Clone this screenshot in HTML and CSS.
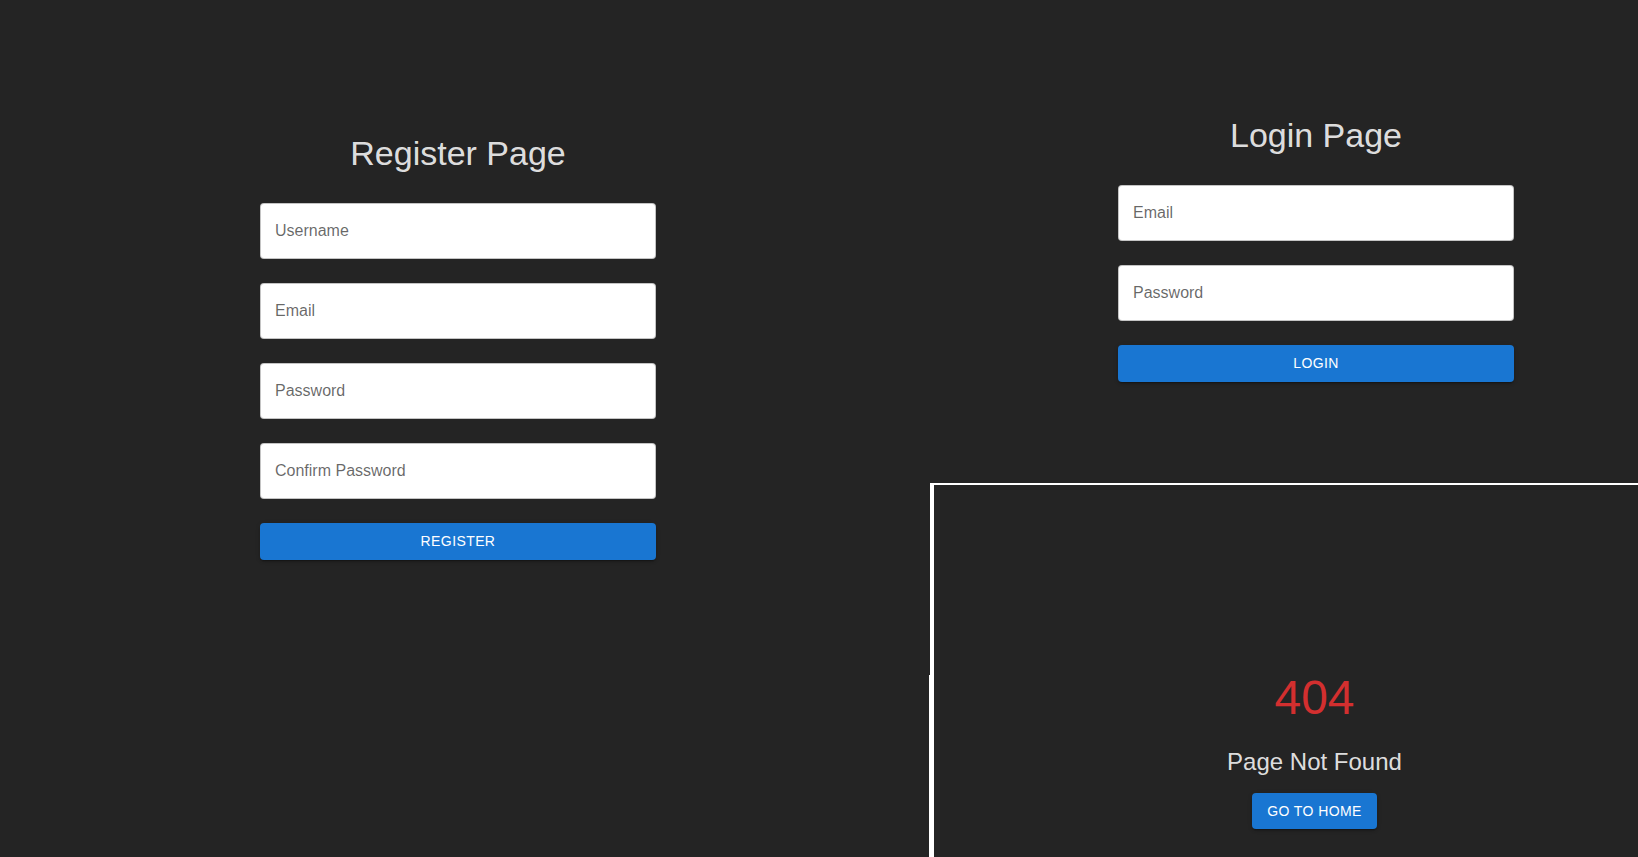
FILE: index.html
```html
<!DOCTYPE html>
<html lang="en">
<head>
<meta charset="utf-8">
<title>Auth Pages</title>
<link rel="stylesheet" href="styles.css">
</head>
<body>
<main class="page">
  <section class="col-left">
    <form class="form form-register">
      <h1 class="title">Register Page</h1>
      <input class="field" type="text" placeholder="Username">
      <input class="field" type="email" placeholder="Email">
      <input class="field" type="password" placeholder="Password">
      <input class="field" type="password" placeholder="Confirm Password">
      <button class="btn btn-full" type="button">Register</button>
    </form>
  </section>
  <section class="col-right">
    <form class="form form-login">
      <h1 class="title">Login Page</h1>
      <input class="field" type="email" placeholder="Email">
      <input class="field" type="password" placeholder="Password">
      <button class="btn btn-full" type="button">Login</button>
    </form>
    <div class="notfound">
      <div class="nf-code">404</div>
      <div class="nf-text">Page Not Found</div>
      <button class="btn" type="button">Go to Home</button>
    </div>
  </section>
</main>
</body>
</html>
```
FILE: styles.css
```css
html, body {
  margin: 0;
  padding: 0;
  overflow: hidden;
  height: 100%;
}
body {
  background: #242424;
  color: rgba(255, 255, 255, 0.87);
  font-family: "Liberation Sans", Arial, Helvetica, sans-serif;
}
.page {
  display: grid;
  grid-template-columns: 930px 772px;
  height: 857px;
}
.col-left {
  padding-left: 260px;
  padding-top: 132px;
}
.col-right {
  display: flex;
  flex-direction: column;
}
.form {
  width: 396px;
  display: flex;
  flex-direction: column;
  gap: 24px;
}
.form-login {
  margin: 114px 0 0 188px;
}
.title {
  margin: 0 0 5px 0;
  font-size: 34px;
  font-weight: 400;
  line-height: 42px;
  text-align: center;
  color: rgba(255, 255, 255, 0.87);
}
.field {
  box-sizing: border-box;
  height: 56px;
  width: 100%;
  margin: 0;
  padding: 0 14px;
  border: 1px solid rgba(0, 0, 0, 0.23);
  border-radius: 4px;
  background: #fff;
  font-family: inherit;
  font-size: 16px;
  color: rgba(0, 0, 0, 0.87);
  outline: none;
}
.field::placeholder {
  color: rgba(0, 0, 0, 0.6);
  opacity: 1;
}
.btn {
  box-sizing: border-box;
  height: 37px;
  padding: 0 16px 1px;
  border: 0;
  border-radius: 4px;
  background: #1976d2;
  color: #fff;
  font-family: inherit;
  font-size: 14px;
  font-weight: 500;
  letter-spacing: 0.4px;
  text-transform: uppercase;
  box-shadow: 0 3px 1px -2px rgba(0,0,0,0.2), 0 2px 2px 0 rgba(0,0,0,0.14), 0 1px 5px 0 rgba(0,0,0,0.12);
  cursor: pointer;
}
.btn-full {
  width: 100%;
}
.notfound {
  position: relative;
  margin-top: 101px;
  flex: 1;
  width: 761px;
  border-top: 2px solid #fff;
  border-left: 4px solid #fff;
  padding-top: 185px;
  display: flex;
  flex-direction: column;
  align-items: center;
}
.notfound::before {
  content: "";
  position: absolute;
  left: -5px;
  top: 190px;
  bottom: 0;
  width: 1px;
  background: #fff;
}
.nf-code {
  font-size: 48px;
  line-height: 56px;
  color: #d32f2f;
  margin-bottom: 20px;
}
.nf-text {
  font-size: 24px;
  line-height: 32px;
  margin-bottom: 15px;
}
.notfound .btn {
  height: 36px;
  width: 125px;
  padding: 0 0 1px;
}
```
